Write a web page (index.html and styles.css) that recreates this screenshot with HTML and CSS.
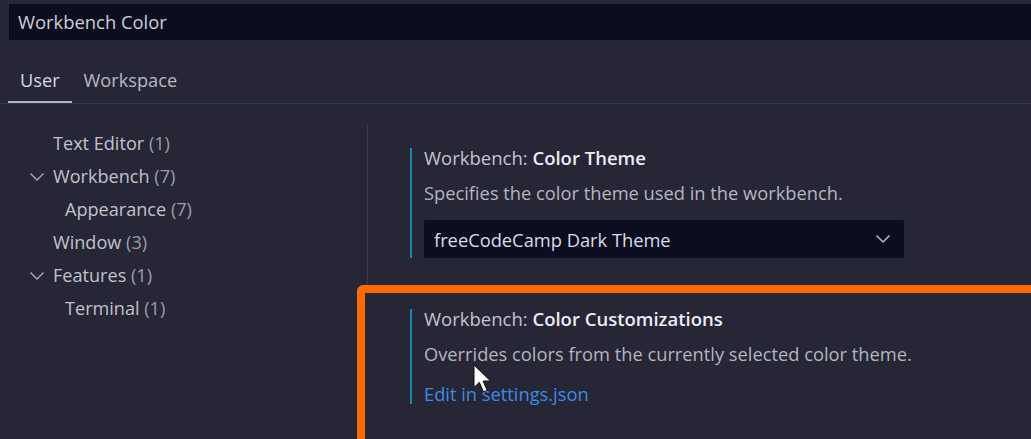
FILE: index.html
```html
<!DOCTYPE html>
<html>
<head>
<meta charset="utf-8">
<link rel="stylesheet" href="styles.css">
</head>
<body>
<div class="app">
  <div class="search">Workbench Color</div>
  <div class="tabs">
    <div class="tab active">User</div>
    <div class="tab">Workspace</div>
  </div>
  <div class="main">
    <div class="tree">
      <div class="row l1">Text Editor <span class="count">(1)</span></div>
      <div class="row l1"><svg class="chev" width="16" height="10" viewBox="0 0 16 10"><path d="M1.5 1.5 L8 8 L14.5 1.5" fill="none" stroke="#a8a8b4" stroke-width="1.4"/></svg>Workbench <span class="count">(7)</span></div>
      <div class="row l2">Appearance <span class="count">(7)</span></div>
      <div class="row l1">Window <span class="count">(3)</span></div>
      <div class="row l1"><svg class="chev" width="16" height="10" viewBox="0 0 16 10"><path d="M1.5 1.5 L8 8 L14.5 1.5" fill="none" stroke="#a8a8b4" stroke-width="1.4"/></svg>Features <span class="count">(1)</span></div>
      <div class="row l2">Terminal <span class="count">(1)</span></div>
    </div>
    <div class="settings">
      <div class="setting first">
        <div class="title">Workbench: <b>Color Theme</b></div>
        <div class="desc">Specifies the color theme used in the workbench.</div>
        <div class="select">
          <span>freeCodeCamp Dark Theme</span>
          <svg width="16" height="10" viewBox="0 0 16 10"><path d="M1.5 1.5 L8 8 L14.5 1.5" fill="none" stroke="#b8b8c4" stroke-width="1.5"/></svg>
        </div>
      </div>
      <div class="setting second">
        <div class="title">Workbench: <b>Color Customizations</b></div>
        <div class="desc">Overrides colors from the currently selected color theme.</div>
        <div class="link">Edit in settings.json</div>
      </div>
    </div>
  </div>
  <div class="highlight"></div>
  <svg class="cursor" width="22" height="32" viewBox="0 0 22 32"><path d="M1 1 L1 23.5 L6.3 18.3 L10.5 28 L14.2 26.4 L10.1 17 L17.5 17 Z" fill="#ffffff" stroke="#111" stroke-width="1"/></svg>
</div>
</body>
</html>
```
FILE: styles.css
```css
* { box-sizing: border-box; }
html, body { margin: 0; padding: 0; }
body {
  background: #262637;
  font-family: "Open Sans", "Noto Sans", sans-serif;
  color: #c4c4cc;
  width: 1031px;
  height: 439px;
  overflow: hidden;
}
.app { position: relative; height: 439px; }
.search {
  margin: 4px 0 0 9px;
  height: 36px;
  background: #0d0d20;
  padding-left: 9px;
  font-size: 18.4px;
  line-height: 36px;
  color: #cfcfd6;
}
.tabs {
  display: flex;
  height: 64px;
  align-items: flex-end;
  padding-left: 8px;
  border-bottom: 1px solid #36364a;
}
.tab {
  height: 40px;
  line-height: 34px;
  font-size: 18.2px;
  padding: 0 12px;
  color: #b9b9c3;
  border-bottom: 2px solid transparent;
}
.tab.active {
  color: #d8d8e0;
  border-bottom-color: #b4b4bf;
}
.main { display: flex; }
.tree {
  width: 368px;
  flex-shrink: 0;
  margin-top: 21px;
  padding-top: 2px;
  height: 165px;
  border-right: 1px solid #3c3c52;
  font-size: 18.1px;
}
.row {
  height: 33px;
  line-height: 33px;
  position: relative;
  white-space: pre;
  color: #c2c2ca;
}
.row.l1 { padding-left: 53px; }
.row.l2 { padding-left: 65px; }
.chev { position: absolute; left: 29px; top: 12px; }
.count { color: #9c9ca8; }
.settings { padding-left: 42px; padding-top: 44px; }
.setting {
  border-left: 2px solid #1b88a6;
  padding-left: 12px;
}
.setting.second { margin-top: 51px; }
.title { font-size: 18.5px; line-height: 20px; color: #c4c4cc; }
.title b { color: #ececf2; font-weight: 600; }
.desc { font-size: 18.3px; line-height: 20px; margin-top: 15px; color: #b5b5be; }
.select {
  margin-top: 17px;
  width: 480px;
  height: 38px;
  background: #0d0d20;
  display: flex;
  align-items: center;
  justify-content: space-between;
  padding: 0 13px 0 10px;
  font-size: 18.3px;
  color: #dcdce4;
  border-radius: 2px;
}
.link { font-size: 18.3px; line-height: 20px; margin-top: 20px; color: #3d8ae0; }
.highlight {
  position: absolute;
  left: 357px;
  top: 281px;
  width: 700px;
  height: 170px;
  border: 8px solid #ff6a00;
  border-radius: 6px;
}
.cursor { position: absolute; left: 473px; top: 360px; }
```
